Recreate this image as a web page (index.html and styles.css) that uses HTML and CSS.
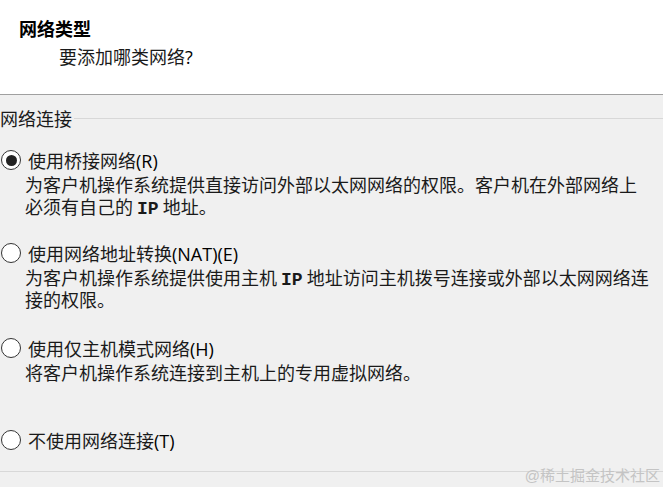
FILE: index.html
```html
<!DOCTYPE html>
<html lang="zh-CN">
<head>
<meta charset="utf-8">
<link rel="stylesheet" href="styles.css">
</head>
<body>
<div class="page">
  <header class="header">
    <div class="title">网络类型</div>
    <div class="subtitle">要添加哪类网络<span class="latin">?</span></div>
  </header>
  <main class="content">
    <div class="legend"><span class="legend-text">网络连接</span><span class="legend-line"></span></div>
    <div class="option opt1">
      <div class="label-row"><span class="radio checked"></span><span class="label">使用桥接网络<span class="latin">(R)</span></span></div>
      <div class="desc">
        <div class="line">为客户机操作系统提供直接访问外部以太网网络的权限。客户机在外部网络上</div>
        <div class="line">必须有自己的 <b class="mono">IP</b> 地址。</div>
      </div>
    </div>
    <div class="option opt2">
      <div class="label-row"><span class="radio"></span><span class="label">使用网络地址转换<span class="latin">(NAT)(E)</span></span></div>
      <div class="desc">
        <div class="line">为客户机操作系统提供使用主机 <b class="mono">IP</b> 地址访问主机拨号连接或外部以太网网络连</div>
        <div class="line">接的权限。</div>
      </div>
    </div>
    <div class="option opt3">
      <div class="label-row"><span class="radio"></span><span class="label">使用仅主机模式网络<span class="latin">(H)</span></span></div>
      <div class="desc">
        <div class="line">将客户机操作系统连接到主机上的专用虚拟网络。</div>
      </div>
    </div>
    <div class="option opt4">
      <div class="label-row"><span class="radio"></span><span class="label">不使用网络连接<span class="latin">(T)</span></span></div>
    </div>
    <div class="bottom-line"></div>
  </main>
  <div class="watermark"><span class="at">@</span>稀土掘金技术社区</div>
</div>
</body>
</html>
```
FILE: styles.css
```css
* { box-sizing: border-box; }
html, body { margin: 0; padding: 0; }
body {
  width: 663px;
  height: 487px;
  overflow: hidden;
  font-family: "Noto Sans CJK SC", "Liberation Sans", sans-serif;
  font-size: 18px;
  color: #1a1a1a;
  background: #f0f0f0;
}
.page { position: relative; width: 663px; height: 487px; }
.header {
  height: 95px;
  background: #fff;
  border-bottom: 1px solid #a0a0a0;
  padding-top: 17px;
}
.title {
  height: 22px;
  padding-left: 19px;
  font-weight: bold;
  line-height: 22px;
  color: #000;
}
.subtitle {
  height: 22px;
  padding-left: 59px;
  margin-top: 6px;
  line-height: 22px;
}
.content { padding-top: 12px; }
.legend {
  display: flex;
  align-items: center;
  height: 22px;
  line-height: 22px;
}
.legend-text { padding-right: 2px; }
.legend-line { flex: 1; height: 1px; background: #d8d8d8; margin-top: 1px; }
.option { display: flex; flex-direction: column; }
.opt1 { margin-top: 20px; }
.opt2 { margin-top: 25px; }
.opt3 { margin-top: 27px; }
.opt4 { margin-top: 46px; }
.label-row {
  display: flex;
  align-items: center;
  height: 22px;
  overflow: visible;
}
.radio {
  width: 20px;
  height: 20px;
  margin-left: 1px;
  margin-right: 7px;
  border: 1px solid #333;
  border-radius: 50%;
  background: #fff;
  display: flex;
  align-items: center;
  justify-content: center;
  flex: none;
}
.radio.checked::after {
  content: "";
  width: 11px;
  height: 11px;
  border-radius: 50%;
  background: #222;
}
.label { line-height: 22px; white-space: nowrap; }
.latin { font-family: "Open Sans", "Liberation Sans", sans-serif; color: #000; line-height: 1; }
.desc {
  padding-left: 25px;
  margin-top: 2px;
}
.line {
  height: 22px;
  line-height: 22px;
  white-space: nowrap;
}
.mono { font-family: "Liberation Mono", monospace; font-weight: bold; line-height: 1; }
.bottom-line {
  margin-top: 20px;
  height: 1px;
  background: #d8d8d8;
}
.watermark {
  position: absolute;
  right: 3px;
  top: 465px;
  font-size: 15px;
  line-height: 20px;
  color: #c4c4c4;
  white-space: nowrap;
}
.at { font-family: "Liberation Sans", sans-serif; font-size: 15px; }
```
